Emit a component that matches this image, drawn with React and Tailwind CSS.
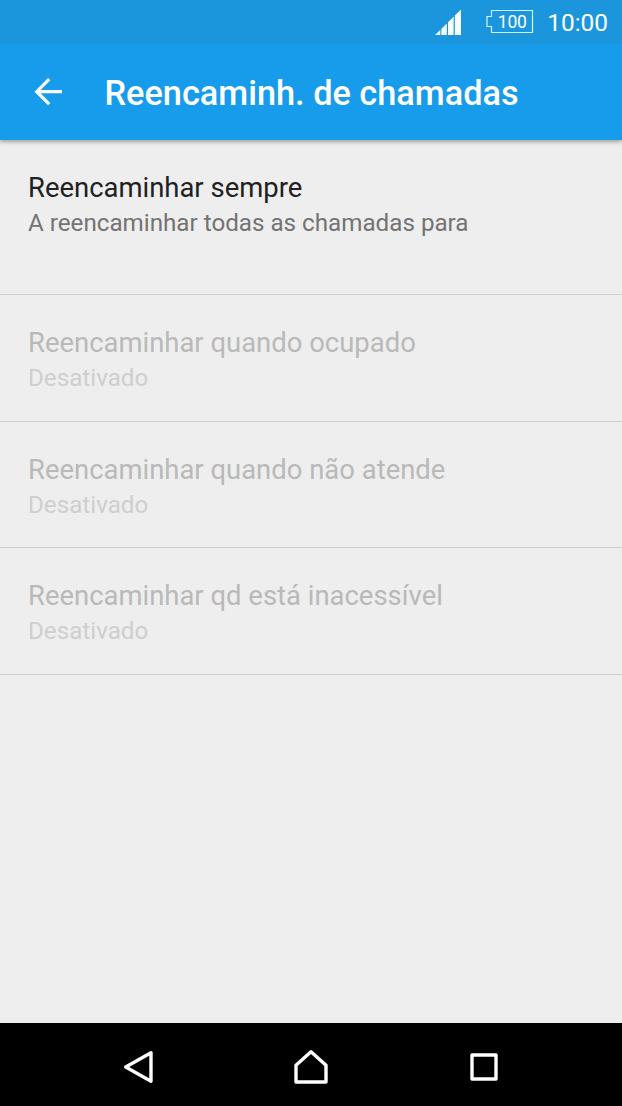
const options = [
  { title: "Reencaminhar quando ocupado", status: "Desativado" },
  { title: "Reencaminhar quando não atende", status: "Desativado" },
  { title: "Reencaminhar qd está inacessível", status: "Desativado" },
];

function StatusBar() {
  return (
    <div className="relative z-10 h-11 shrink-0 bg-[#1b96dc] flex items-start justify-end pr-[14px] text-white">
      <svg className="mt-[9px] w-[27px] h-[27px]" viewBox="0 0 27 27" fill="#f4fdff">
        <path d="M0 26 L5.3 21 V26Z" />
        <path d="M6.4 19.8 L11.8 14.5 V26 H6.4Z" />
        <path d="M13 13.2 L18.6 7.7 V26 H13Z" />
        <path d="M19.8 6.4 L26 0.5 V26 H19.8Z" />
      </svg>
      <div className="relative mt-[10px] ml-[24px] w-[48px] h-[23px]">
        <svg className="absolute inset-0" width="48" height="23" viewBox="0 0 48 23" fill="none" stroke="#d3f6fb" strokeWidth="1.2">
          <path d="M5.5 0.5 H46.5 V22.5 H5.5 V16.5 H1 V6.5 H5.5Z" />
        </svg>
        <span className="relative block pl-[12px] text-[17.5px] leading-[24px] tracking-[-0.2px]">100</span>
      </div>
      <span className="ml-[13.5px] mt-[9px] text-[24.4px] leading-[28px]">10:00</span>
    </div>
  );
}

function Header() {
  return (
    <header className="relative h-24 shrink-0 bg-[#179cec] flex items-center pl-[34px] shadow-[0_1px_5px_rgba(0,0,0,0.45)]">
      <svg className="w-7 h-7" viewBox="0 0 28 28" fill="none" stroke="#fff" strokeWidth="3.2">
        <path d="M28 13.7 H3 M15.2 1.2 L2.7 13.7 L15.2 26.2" />
      </svg>
      <h1 className="ml-[42.5px] mt-[2px] text-[34.3px] leading-10 font-medium text-white whitespace-nowrap">
        Reencaminh. de chamadas
      </h1>
    </header>
  );
}

function OptionRow({ title, status }) {
  return (
    <li className="h-[126.6px] border-b border-[#cfcfcf] pt-[30px] pl-7">
      <p className="text-[27.45px] leading-9 text-[#b9b9b9]">{title}</p>
      <p className="text-[24.2px] leading-[34px] text-[#cecece]">{status}</p>
    </li>
  );
}

function NavBar() {
  return (
    <nav className="h-[83px] shrink-0 bg-black flex items-center justify-between pt-[4px] px-[122px]">
      <svg width="34" height="36" viewBox="0 0 34 36" fill="none" stroke="#fff" strokeWidth="3.4" strokeLinejoin="round">
        <path d="M29 3.7 V32.3 L3.7 18Z" />
      </svg>
      <svg className="-ml-[2px]" width="36" height="36" viewBox="0 0 36 36" fill="none" stroke="#fff" strokeWidth="3.4" strokeLinejoin="round">
        <path d="M18 2.7 L33 16.2 V33 H3 V16.2Z" />
      </svg>
      <svg width="32" height="32" viewBox="0 0 32 32" fill="none" stroke="#fff" strokeWidth="3.4" strokeLinejoin="round">
        <path d="M4 4 H28 V28 H4Z" />
      </svg>
    </nav>
  );
}

export default function App() {
  return (
    <div className="w-[622px] h-[1106px] flex flex-col overflow-hidden bg-[#eeeeee] font-['Roboto',sans-serif]">
      <StatusBar />
      <Header />
      <main className="flex-1">
        <section className="h-[155px] border-b border-[#cfcfcf] pt-[30px] pl-7">
          <p className="text-[27.45px] leading-9 text-[#212121]">Reencaminhar sempre</p>
          <p className="text-[24.2px] leading-[34px] text-[#737373]">A reencaminhar todas as chamadas para</p>
        </section>
        <ul>
          {options.map((option) => (
            <OptionRow key={option.title} {...option} />
          ))}
        </ul>
      </main>
      <NavBar />
    </div>
  );
}
